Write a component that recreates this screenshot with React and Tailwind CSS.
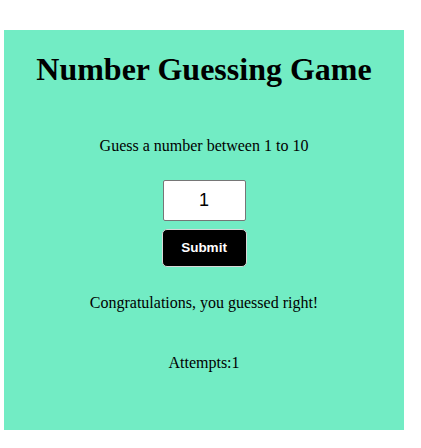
export default function App() {
  return (
    <div className="w-[421px] h-[448px] bg-white pt-[30px] pl-[4px]">
      <div
        className="w-[400px] h-[400px] bg-[#72ecc4] flex flex-col items-center pt-[21px] text-black"
        style={{ fontFamily: '"Liberation Serif", "Times New Roman", serif' }}
      >
        <h1 className="text-[32px] leading-[36px] font-bold">Number Guessing Game</h1>
        <p className="mt-[50px] text-[16px] leading-[18px]">Guess a number between 1 to 10</p>
        <input
          type="text"
          defaultValue="1"
          readOnly
          className="mt-[25px] w-[83px] h-[41px] bg-white border border-[#767676] rounded-[2px] text-center text-[18px] text-black outline-none"
          style={{ fontFamily: '"Liberation Sans", Arial, sans-serif' }}
        />
        <button
          className="mt-[8px] w-[85px] h-[38px] bg-black border border-[#d8d8d8] rounded-[5px] text-white text-[13.5px] font-bold"
          style={{ fontFamily: '"Liberation Sans", Arial, sans-serif' }}
        >
          Submit
        </button>
        <p className="mt-[27px] text-[16px] leading-[18px]">Congratulations, you guessed right!</p>
        <p className="mt-[42px] text-[16px] leading-[18px]">Attempts:1</p>
      </div>
    </div>
  );
}
